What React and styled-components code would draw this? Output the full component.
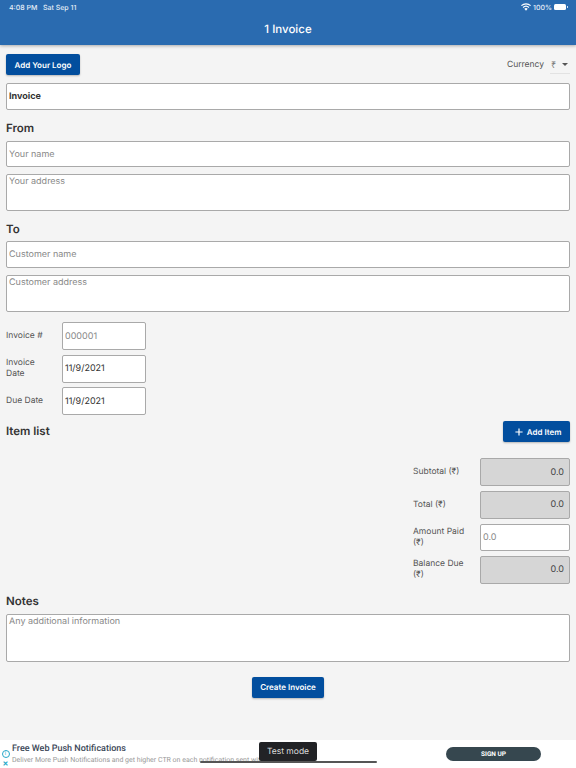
import React from "react";
import styled, { createGlobalStyle } from "styled-components";

const GlobalStyle = createGlobalStyle`
    html, body {
        margin: 0;
        padding: 0;
        background: #f4f4f4;
    }
    * {
        box-sizing: border-box;
    }
    body {
        font-family: Inter, "Noto Sans", sans-serif;
        color: #333;
        text-rendering: geometricPrecision;
    }
`;

const App = () => {
    return (
        <Page>
            <GlobalStyle />
            <Header>
                <StatusBar>
                    <StatusText>4:08 PM&nbsp;&nbsp; Sat Sep 11</StatusText>
                    <StatusRight>
                        <svg width="10" height="8" viewBox="0 0 20 15" fill="#fff">
                            <path d="M10 15 L6.6 11.2 A5 5 0 0 1 13.4 11.2 Z" />
                            <path d="M4.9 9.4 L3.3 7.6 A10 10 0 0 1 16.7 7.6 L15.1 9.4 A7.6 7.6 0 0 0 4.9 9.4 Z" />
                            <path d="M1.6 5.7 L0 4 A15 15 0 0 1 20 4 L18.4 5.7 A12.6 12.6 0 0 0 1.6 5.7 Z" />
                        </svg>
                        <StatusText>100%</StatusText>
                        <Battery />
                    </StatusRight>
                </StatusBar>
                <Title>1 Invoice</Title>
            </Header>

            <Content>
                <TopRow>
                    <Button>Add Your Logo</Button>
                    <CurrencyWrap>
                        <CurrencyLabel>Currency</CurrencyLabel>
                        <CurrencySelect>
                            <span>₹</span>
                            <Caret />
                        </CurrencySelect>
                    </CurrencyWrap>
                </TopRow>

                <TextInput $height={27} $bold defaultValue="Invoice" />

                <SectionTitle $top={11}>From</SectionTitle>
                <TextInput $height={26} placeholder="Your name" />
                <TextArea $height={37} $top={7} placeholder="Your address" />

                <SectionTitle $top={11} $bottom={5}>To</SectionTitle>
                <TextInput $height={27} placeholder="Customer name" />
                <TextArea $height={37} $top={7} placeholder="Customer address" />

                <MetaGrid>
                    <MetaLabel>Invoice #</MetaLabel>
                    <TextInput $height={28} placeholder="000001" />
                    <MetaLabel>Invoice Date</MetaLabel>
                    <TextInput $height={28} defaultValue="11/9/2021" />
                    <MetaLabel>Due Date</MetaLabel>
                    <TextInput $height={28} defaultValue="11/9/2021" />
                </MetaGrid>

                <ItemRow>
                    <SectionTitle>Item list</SectionTitle>
                    <Button>
                        <PlusIcon width="8" height="8" viewBox="0 0 10 10" stroke="#fff" strokeWidth="1.5">
                            <path d="M5 0.5V9.5M0.5 5H9.5" />
                        </PlusIcon>
                        Add Item
                    </Button>
                </ItemRow>

                <TotalsGrid>
                    <MetaLabel>Subtotal (₹)</MetaLabel>
                    <AmountBox>0.0</AmountBox>
                    <MetaLabel>Total (₹)</MetaLabel>
                    <AmountBox>0.0</AmountBox>
                    <MetaLabel>Amount Paid (₹)</MetaLabel>
                    <TextInput $height={27} placeholder="0.0" />
                    <MetaLabel>Balance Due (₹)</MetaLabel>
                    <AmountBox>0.0</AmountBox>
                </TotalsGrid>

                <SectionTitle $top={10}>Notes</SectionTitle>
                <TextArea $height={48} placeholder="Any additional information" />

                <CreateRow>
                    <Button>Create Invoice</Button>
                </CreateRow>
            </Content>

            <AdBar>
                <AdMarks>
                    <InfoMark>i</InfoMark>
                    <CloseMark>✕</CloseMark>
                </AdMarks>
                <AdText>
                    <AdTitle>Free Web Push Notifications</AdTitle>
                    <AdBody>Deliver More Push Notifications and get higher CTR on each notification sent with M</AdBody>
                </AdText>
                <SignUp>SIGN UP</SignUp>
            </AdBar>
            <HomeIndicator />
            <Toast>Test mode</Toast>
        </Page>
    );
};

export default App;

// Styled components
const Page = styled.div`
    position: relative;
    display: flex;
    flex-direction: column;
    width: 576px;
    height: 768px;
    overflow: hidden;
    background: #f4f4f4;
`;

const Header = styled.header`
    display: flex;
    flex-direction: column;
    height: 45px;
    background: #2a6bb0;
    box-shadow: 0 1px 3px rgba(0, 0, 0, 0.3);
    color: #fff;
`;

const StatusBar = styled.div`
    display: flex;
    justify-content: space-between;
    align-items: center;
    height: 14px;
    padding: 0 9px 0 9px;
`;

const StatusText = styled.span`
    font-size: 7px;
    font-weight: 500;
    color: #e6eef7;
`;

const StatusRight = styled.div`
    display: flex;
    align-items: center;
    gap: 2px;
`;

const Battery = styled.div`
    position: relative;
    width: 12px;
    height: 5.5px;
    margin-right: 1px;
    border-radius: 1.5px;
    background: #fff;

    &::after {
        content: "";
        position: absolute;
        right: -1.5px;
        top: 1.5px;
        width: 1px;
        height: 2.5px;
        background: #cfe0f2;
    }
`;

const Title = styled.div`
    margin-top: 8px;
    font-size: 11.5px;
    font-weight: 500;
    text-align: center;
`;

const Content = styled.main`
    display: flex;
    flex-direction: column;
    padding: 9px 6px 0;
`;

const TopRow = styled.div`
    display: flex;
    justify-content: space-between;
    align-items: center;
    height: 21px;
    margin-bottom: 8px;
`;

const Button = styled.button`
    display: inline-flex;
    align-items: center;
    justify-content: center;
    gap: 3px;
    height: 21px;
    padding: 0 8.5px;
    border: none;
    border-radius: 2px;
    background: #024e9e;
    box-shadow: 0 1px 2px rgba(0, 0, 0, 0.25);
    color: #fff;
    font-family: inherit;
    font-size: 8px;
    font-weight: 600;
    text-rendering: geometricPrecision;
`;

const PlusIcon = styled.svg`
    margin: 0 1px 0 3px;
`;

const CurrencyWrap = styled.div`
    display: flex;
    align-items: center;
    gap: 6px;
`;

const CurrencyLabel = styled.span`
    padding-top: 1px;
    font-size: 8.5px;
    color: #555;
`;

const CurrencySelect = styled.div`
    display: flex;
    align-items: center;
    justify-content: space-between;
    width: 20px;
    height: 19px;
    padding: 0 2px 0 1px;
    border-bottom: 1px solid #e2e2e2;
    font-family: "Noto Sans", sans-serif;
    font-size: 9px;
    color: #777;
`;

const Caret = styled.i`
    width: 0;
    height: 0;
    border-left: 3px solid transparent;
    border-right: 3px solid transparent;
    border-top: 3px solid #555;
`;

const fieldStyles = `
    display: block;
    width: 100%;
    margin: 0;
    padding: 0 2px;
    border: 1px solid #a9a9a9;
    border-radius: 2px;
    background: #fff;
    outline: none;
    font-family: Inter, "Noto Sans", sans-serif;
    font-size: 9px;
    color: #333;
    text-rendering: geometricPrecision;

    &::placeholder {
        color: #888;
        opacity: 1;
    }
`;

const TextInput = styled.input`
    ${fieldStyles}
    height: ${(props) => props.$height}px;
    font-weight: ${(props) => (props.$bold ? 700 : 400)};
`;

const TextArea = styled.textarea`
    ${fieldStyles}
    height: ${(props) => props.$height}px;
    margin-top: ${(props) => props.$top || 0}px;
    padding-top: 1px;
    resize: none;
`;

const SectionTitle = styled.h2`
    margin: ${(props) => props.$top || 0}px 0 ${(props) => props.$bottom ?? 6}px;
    font-size: 11.5px;
    line-height: 14px;
    font-weight: 600;
    color: #333;
`;

const MetaGrid = styled.div`
    display: grid;
    grid-template-columns: 56px 84px;
    grid-auto-rows: 28px;
    row-gap: 4.5px;
    align-items: center;
    margin-top: 10px;
`;

const MetaLabel = styled.div`
    padding: 1px 8px 0 0;
    font-size: 8.5px;
    line-height: 11px;
    color: #555;
`;

const ItemRow = styled.div`
    display: flex;
    justify-content: space-between;
    align-items: center;
    height: 21px;
    margin-top: 6px;

    h2 {
        margin: 0 0 1px;
    }
`;

const TotalsGrid = styled.div`
    display: grid;
    grid-template-columns: 67px 90px;
    grid-auto-rows: 28px;
    row-gap: 4.5px;
    align-items: center;
    justify-content: end;
    margin-top: 16px;
`;

const AmountBox = styled.div`
    display: flex;
    align-items: center;
    justify-content: flex-end;
    height: 28px;
    padding-right: 5px;
    border: 1px solid #a9a9a9;
    border-radius: 2px;
    background: #d6d6d6;
    font-size: 9px;
    color: #444;
`;

const CreateRow = styled.div`
    display: flex;
    justify-content: center;
    margin-top: 15px;
`;

const AdBar = styled.footer`
    display: flex;
    align-items: center;
    height: 28px;
    margin-top: auto;
    padding-left: 1px;
    background: #fff;
`;

const AdMarks = styled.div`
    display: flex;
    flex-direction: column;
    align-items: center;
    justify-content: flex-end;
    gap: 2px;
    width: 9px;
    height: 100%;
    padding-bottom: 1px;
`;

const InfoMark = styled.span`
    display: flex;
    align-items: center;
    justify-content: center;
    width: 8px;
    height: 8px;
    border: 1px solid #27a8c9;
    border-radius: 50%;
    font-size: 5.5px;
    color: #27a8c9;
`;

const CloseMark = styled.span`
    font-size: 7px;
    line-height: 7px;
    font-weight: 700;
    color: #27a8c9;
`;

const AdText = styled.div`
    width: 285px;
    margin-left: 2px;
    white-space: nowrap;
`;

const AdTitle = styled.div`
    font-family: Roboto, sans-serif;
    font-size: 9px;
    line-height: 12px;
    font-weight: 500;
    color: #3c4858;
`;

const AdBody = styled.div`
    font-family: Roboto, sans-serif;
    font-size: 7px;
    line-height: 10px;
    color: #999;
`;

const SignUp = styled.div`
    display: flex;
    align-items: center;
    justify-content: center;
    width: 95px;
    height: 14px;
    margin-left: 149px;
    border-radius: 7px;
    background: #36474f;
    font-family: Roboto, sans-serif;
    font-size: 6.5px;
    font-weight: 700;
    color: #fff;
`;

const HomeIndicator = styled.div`
    position: absolute;
    left: 200px;
    bottom: 5px;
    width: 177px;
    height: 2px;
    border-radius: 1px;
    background: #555;
`;

const Toast = styled.div`
    position: absolute;
    left: 259px;
    top: 742px;
    display: flex;
    align-items: center;
    justify-content: center;
    width: 58px;
    height: 19px;
    border-radius: 2px;
    background: #222326;
    font-size: 8.5px;
    color: #ddd;
`;
